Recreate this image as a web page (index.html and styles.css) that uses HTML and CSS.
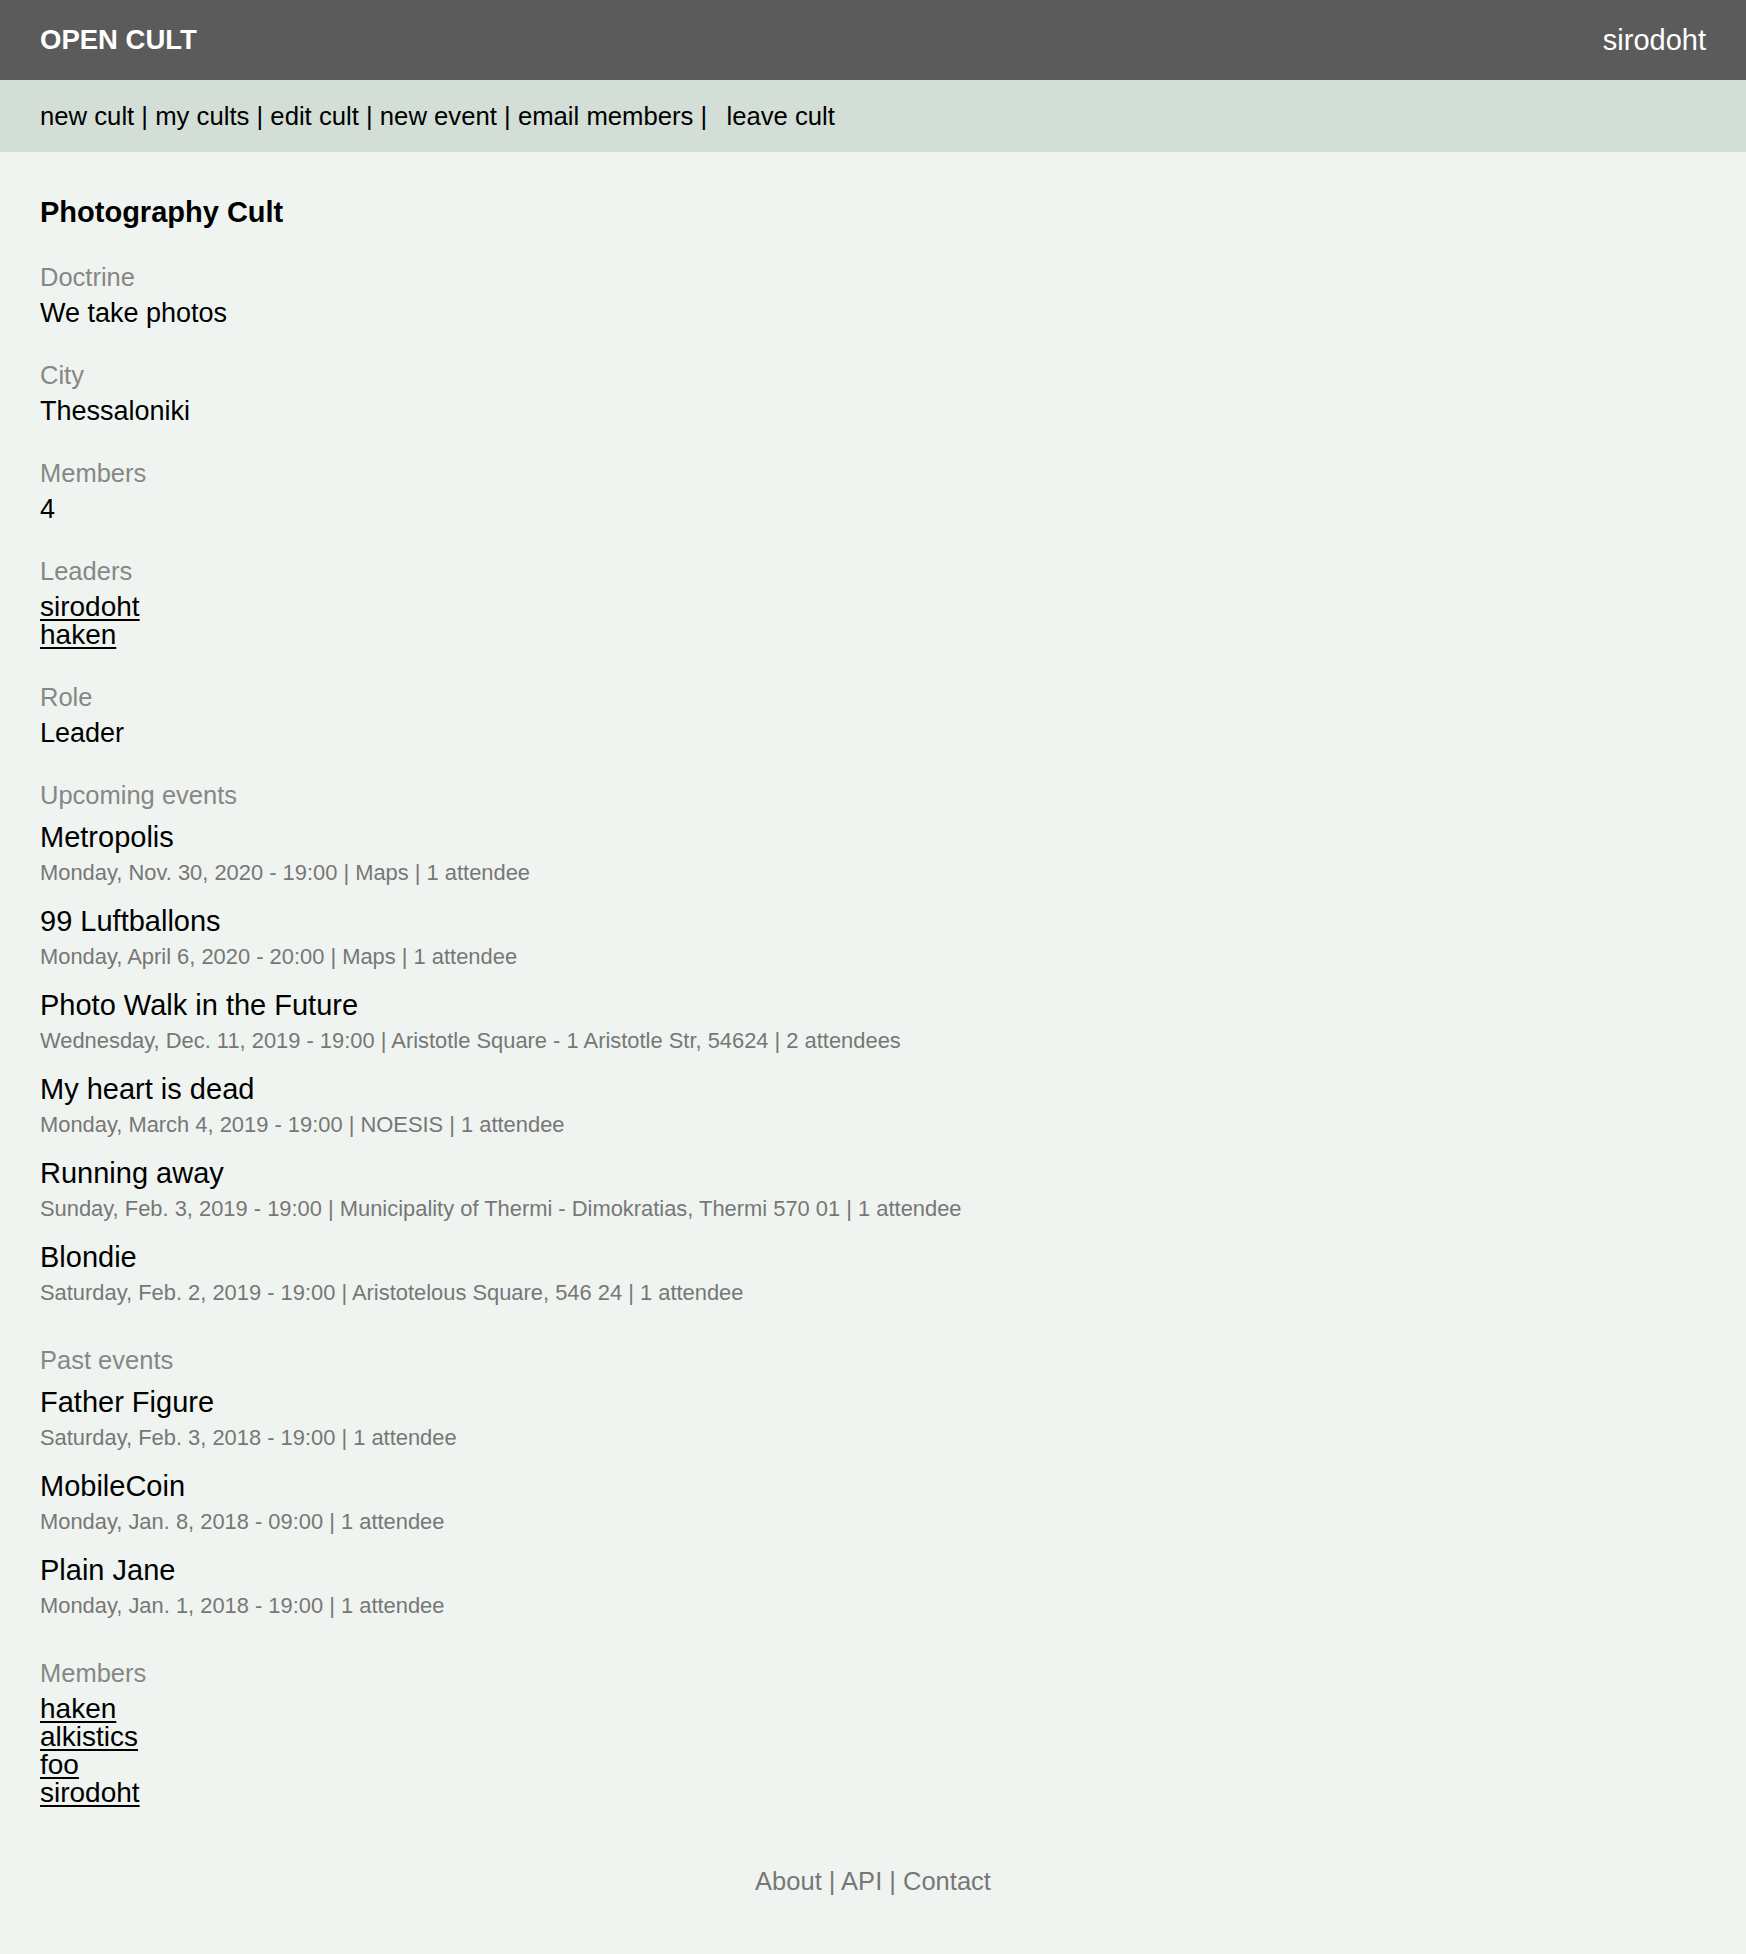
FILE: index.html
```html
<!DOCTYPE html>
<html>
    <head>
        <meta charset="utf-8">
        <title>Photography Cult - Open Cult</title>
        <link rel="stylesheet" href="styles.css">
    </head>
    <body>
        <header id="top">
            <a class="brand" href="/">OPEN CULT</a>
            <a class="user" href="/profile/">sirodoht</a>
        </header>
        <nav id="actions">
            <a href="/new/">new cult</a> |
            <a href="/cults/">my cults</a> |
            <a href="/edit/">edit cult</a> |
            <a href="/event/new/">new event</a> |
            <a href="/email/">email members</a> |
            <form class="inline" method="post" action="/leave/"><button type="submit">leave cult</button></form>
        </nav>
        <main>
            <h1>Photography Cult</h1>

            <div class="field">
                <div class="label">Doctrine</div>
                <div class="value">We take photos</div>
            </div>
            <div class="field">
                <div class="label">City</div>
                <div class="value">Thessaloniki</div>
            </div>
            <div class="field">
                <div class="label">Members</div>
                <div class="value">4</div>
            </div>
            <div class="field">
                <div class="label">Leaders</div>
                <div class="people">
                    <a href="/@sirodoht/">sirodoht</a>
                    <a href="/@haken/">haken</a>
                </div>
            </div>
            <div class="field">
                <div class="label">Role</div>
                <div class="value">Leader</div>
            </div>

            <div class="field events">
                <div class="label">Upcoming events</div>
                <div class="event">
                    <div class="title">Metropolis</div>
                    <div class="meta">Monday, Nov. 30, 2020 - 19:00 | Maps | 1 attendee</div>
                </div>
                <div class="event">
                    <div class="title">99 Luftballons</div>
                    <div class="meta">Monday, April 6, 2020 - 20:00 | Maps | 1 attendee</div>
                </div>
                <div class="event">
                    <div class="title">Photo Walk in the Future</div>
                    <div class="meta">Wednesday, Dec. 11, 2019 - 19:00 | Aristotle Square - 1 Aristotle Str, 54624 | 2 attendees</div>
                </div>
                <div class="event">
                    <div class="title">My heart is dead</div>
                    <div class="meta">Monday, March 4, 2019 - 19:00 | NOESIS | 1 attendee</div>
                </div>
                <div class="event">
                    <div class="title">Running away</div>
                    <div class="meta">Sunday, Feb. 3, 2019 - 19:00 | Municipality of Thermi - Dimokratias, Thermi 570 01 | 1 attendee</div>
                </div>
                <div class="event">
                    <div class="title">Blondie</div>
                    <div class="meta">Saturday, Feb. 2, 2019 - 19:00 | Aristotelous Square, 546 24 | 1 attendee</div>
                </div>
            </div>

            <div class="field events">
                <div class="label">Past events</div>
                <div class="event">
                    <div class="title">Father Figure</div>
                    <div class="meta">Saturday, Feb. 3, 2018 - 19:00 | 1 attendee</div>
                </div>
                <div class="event">
                    <div class="title">MobileCoin</div>
                    <div class="meta">Monday, Jan. 8, 2018 - 09:00 | 1 attendee</div>
                </div>
                <div class="event">
                    <div class="title">Plain Jane</div>
                    <div class="meta">Monday, Jan. 1, 2018 - 19:00 | 1 attendee</div>
                </div>
            </div>

            <div class="field">
                <div class="label">Members</div>
                <div class="people">
                    <a href="/@haken/">haken</a>
                    <a href="/@alkistics/">alkistics</a>
                    <a href="/@foo/">foo</a>
                    <a href="/@sirodoht/">sirodoht</a>
                </div>
            </div>
        </main>
        <footer>
            <a href="/about/">About</a> | <a href="/api/">API</a> | <a href="/contact/">Contact</a>
        </footer>
    </body>
</html>
```

FILE: styles.css
```css
html {background:#eff4f0;color:#000;font-family:"Liberation Sans", Arial, sans-serif;}
body {margin:0;padding:0;}
a {color:inherit;}

#top {display:flex;justify-content:space-between;align-items:center;height:80px;padding:0 40px;background-color:#5b5b5b;}
#top a {color:#fff;text-decoration:none;}
#top .brand {font-size:27.5px;font-weight:bold;}
#top .user {font-size:29px;}

#actions {height:72px;padding:0 40px;background-color:#d3dfd6;font-size:25.7px;line-height:72px;}
#actions a {text-decoration:none;}
form.inline {display:inline;margin:0 0 0 12px;}
form.inline button {font:inherit;color:inherit;background:none;border:0;padding:0;cursor:pointer;}

main {padding:0 40px;}
h1 {margin:42px 0 0;font-size:29px;line-height:36px;}

.field {margin-top:26px;}
h1 + .field {margin-top:29px;}
.label {color:#878787;font-size:25.5px;line-height:36px;}
.value {font-size:27px;line-height:36px;}
.people {padding:4px 0;font-size:28px;line-height:28px;}
.people a {display:table;text-decoration-thickness:2px;text-underline-offset:3px;}

.events {padding-bottom:5px;}
.events .label {margin-bottom:6px;}
.event + .event {margin-top:12px;}
.event .title {font-size:29px;line-height:36px;}
.event .meta {color:#777;font-size:21.9px;line-height:36px;}

footer {margin-top:52px;padding-bottom:57px;text-align:center;color:#777;font-size:25.5px;line-height:36px;}
footer a {text-decoration:none;}
```
